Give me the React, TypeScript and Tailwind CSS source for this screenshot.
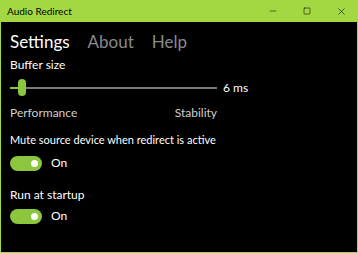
import { Minus, Square, X } from 'lucide-react'

function Toggle() {
  return (
    <div className="flex items-center gap-[9px]">
      <div className="flex h-[15px] w-[32px] items-center justify-end rounded-full bg-[#8cc63f] pr-[4px]">
        <div className="h-[7px] w-[7px] rounded-full bg-white" />
      </div>
      <span className="text-[12px] text-white">On</span>
    </div>
  )
}

export default function App() {
  return (
    <div className="flex h-[253px] w-[358px] flex-col bg-[#a4d843] font-['Lato',sans-serif]">
      {/* title bar */}
      <div className="flex h-[22px] items-center justify-between pl-[7px] text-[10px] text-black">
        <span>Audio Redirect</span>
        <div className="flex h-full items-center">
          <div className="flex w-[34px] justify-center"><Minus size={10} strokeWidth={1.3} /></div>
          <div className="flex w-[34px] justify-center"><Square size={8} strokeWidth={1.6} /></div>
          <div className="flex w-[34px] justify-center"><X size={11} strokeWidth={1.3} /></div>
        </div>
      </div>

      <div className="mx-[1px] mb-[1px] flex flex-1 flex-col bg-black px-[9px] text-white">
        {/* tabs */}
        <div className="mt-[6px] flex gap-[18px] text-[17px] leading-[28px]">
          <span className="text-white">Settings</span>
          <span className="text-[#8a8a8a]">About</span>
          <span className="text-[#8a8a8a]">Help</span>
        </div>

        <div className="text-[12px] leading-[18px]">Buffer size</div>

        {/* slider */}
        <div className="mt-[5px] flex h-[17px] items-center">
          <div className="flex h-full w-[207px] items-center">
            <div className="h-[2px] w-[8px] bg-[#8cc63f]" />
            <div className="h-[17px] w-[8px] rounded-full bg-[#8cc63f]" />
            <div className="h-[2px] flex-1 bg-[#7a7a7a]" />
          </div>
          <span className="ml-[6px] text-[12px]">6 ms</span>
        </div>

        <div className="mt-[8px] flex w-[207px] justify-between text-[12px] leading-[18px] text-[#d0d0d0]">
          <span>Performance</span>
          <span>Stability</span>
        </div>

        <div className="mt-[9px] text-[11px] leading-[18px]">Mute source device when redirect is active</div>
        <div className="mt-[5px]"><Toggle /></div>

        <div className="mt-[14px] text-[12px] leading-[18px]">Run at startup</div>
        <div className="mt-[3px]"><Toggle /></div>
      </div>
    </div>
  )
}
